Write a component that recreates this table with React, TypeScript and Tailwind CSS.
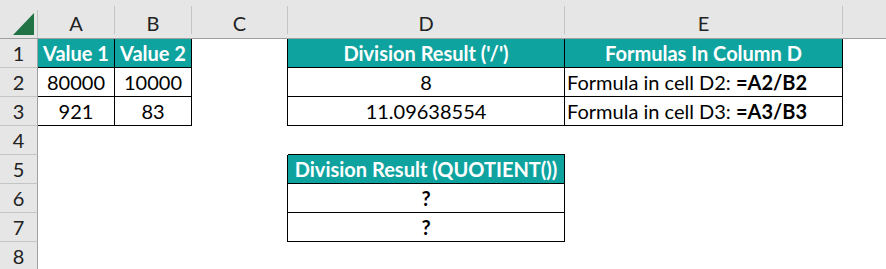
import clsx from 'clsx';

type Cell = {
  text?: React.ReactNode;
  teal?: boolean;
  r?: boolean;
  b?: boolean;
  left?: boolean;
};

const WIDTHS = ['w-[77px]', 'w-[77px]', 'w-[96px]', 'w-[277px]', 'w-[278px]'];
const LETTERS = ['A', 'B', 'C', 'D', 'E'];

const formula = (cell: string, f: string) => (
  <span>
    Formula in cell {cell}: <b className="font-bold">{f}</b>
  </span>
);

const ROWS: Cell[][] = [
  [
    { text: 'Value 1', teal: true, r: true, b: true },
    { text: 'Value 2', teal: true, r: true, b: true },
    { r: true },
    { text: "Division Result ('/')", teal: true, r: true, b: true },
    { text: 'Formulas In Column D', teal: true, r: true, b: true },
  ],
  [
    { text: '80000', r: true, b: true },
    { text: '10000', r: true, b: true },
    { r: true },
    { text: '8', r: true, b: true },
    { text: formula('D2', '=A2/B2'), r: true, b: true, left: true },
  ],
  [
    { text: '921', r: true, b: true },
    { text: '83', r: true, b: true },
    { r: true },
    { text: '11.09638554', r: true, b: true },
    { text: formula('D3', '=A3/B3'), r: true, b: true, left: true },
  ],
  [{}, {}, {}, { b: true }, {}],
  [{}, {}, { r: true }, { text: 'Division Result (QUOTIENT())', teal: true, r: true, b: true }, {}],
  [{}, {}, { r: true }, { text: <b className="font-bold">?</b>, r: true, b: true }, {}],
  [{}, {}, { r: true }, { text: <b className="font-bold">?</b>, r: true, b: true }, {}],
  [{}, {}, {}, {}, {}],
];

export default function App() {
  return (
    <div className="w-[886px] h-[269px] overflow-hidden bg-white text-[20px] text-black font-['Lato','Open_Sans',sans-serif]">
      {/* column headers */}
      <div className="flex h-[39px] bg-[#e6e6e6] border-b border-[#a0a0a0]">
        <div className="w-[38px] h-[28px] mt-[10px] border-r border-[#c4c4c4] relative">
          <svg className="absolute left-[13px] top-[3px]" width="22" height="22" viewBox="0 0 22 22">
            <polygon points="21,0 21,22 0,22" fill="#217346" />
          </svg>
        </div>
        {LETTERS.map((l, i) => (
          <div
            key={l}
            className={clsx(WIDTHS[i], 'h-[28px] mt-[10px] border-r border-[#c4c4c4] flex items-center justify-center text-[#222] leading-none -translate-y-[4px] pt-[6px]')}
          >
            {l}
          </div>
        ))}
        <div className="flex-1" />
      </div>

      {ROWS.map((row, ri) => (
        <div key={ri} className="flex h-[29px]">
          <div className="w-[38px] shrink-0 bg-[#e6e6e6] border-r border-b border-r-[#a0a0a0] border-b-[#c4c4c4] flex items-center justify-center text-[#222]">
            {ri + 1}
          </div>
          {row.map((c, ci) => (
            <div
              key={ci}
              className={clsx(
                WIDTHS[ci],
                'shrink-0 flex items-center whitespace-nowrap',
                c.left ? 'justify-start pl-[2px]' : 'justify-center',
                c.teal && 'bg-[#0fa3a0] text-white font-bold',
                c.r && 'border-r border-r-black',
                c.b && 'border-b border-b-black',
              )}
            >
              {c.text}
            </div>
          ))}
          <div className="flex-1" />
        </div>
      ))}
    </div>
  );
}
